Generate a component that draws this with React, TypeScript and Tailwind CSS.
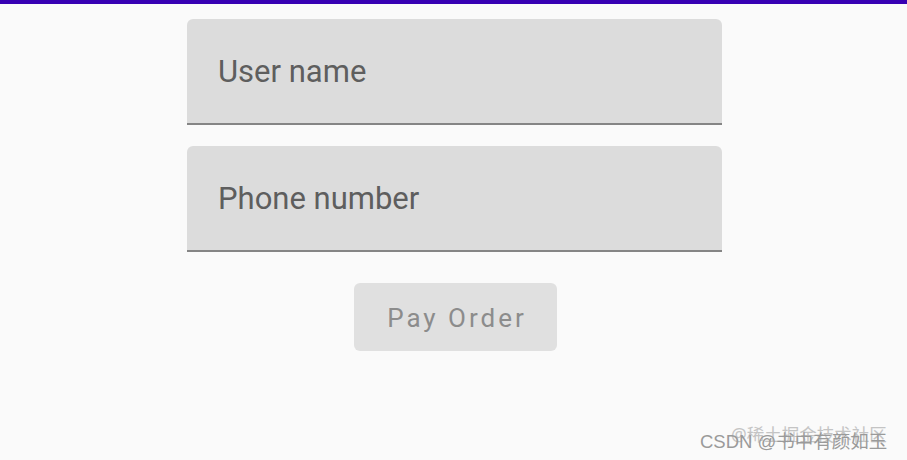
export default function App() {
  const roboto = { fontFamily: "Roboto, 'Noto Sans', sans-serif" };
  return (
    <div className="relative h-[460px] w-[907px] overflow-hidden bg-[#fafafa]" style={roboto}>
      {/* status / app bar strip */}
      <div className="h-[4px] bg-[#3700b3]" />

      <div className="ml-[187px] flex w-[535px] flex-col pt-[15px]">
        <div className="flex h-[106px] items-center rounded-t-[6px] border-b-2 border-[#858585] bg-[#dcdcdc] pl-[31px] pt-[2px]">
          <span className="text-[31px] text-[#5e5e5e]">User name</span>
        </div>
        <div className="mt-[21px] flex h-[106px] items-center rounded-t-[6px] border-b-2 border-[#858585] bg-[#dcdcdc] pl-[31px] pt-[2px]">
          <span className="text-[31px] text-[#5e5e5e]">Phone number</span>
        </div>
        <div className="mt-[31px] flex justify-center pl-[2px]">
          <button className="flex h-[68px] w-[203px] items-center justify-center rounded-[6px] bg-[#e0e0e0] pl-[3px] pt-[3px] text-[26px] tracking-[3px] text-[#8c8c8c]">
            Pay Order
          </button>
        </div>
      </div>

      {/* watermarks */}
      <div
        className="absolute left-[731px] top-[421px] text-[17.5px] text-[#c4c4c4]"
        style={{ fontFamily: "'Noto Sans', 'Noto Sans CJK SC', sans-serif" }}
      >
        @稀土掘金技术社区
      </div>
      <div
        className="absolute left-[700px] top-[428px] text-[18.5px] text-[#9a9a9a]"
        style={{ fontFamily: "'Liberation Sans', 'Noto Sans CJK SC', sans-serif" }}
      >
        CSDN @书中有颜如玉
      </div>
    </div>
  );
}
